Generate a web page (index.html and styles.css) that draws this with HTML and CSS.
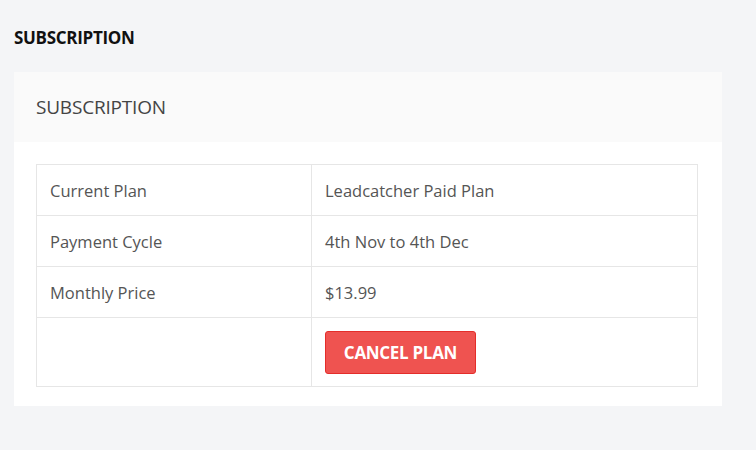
FILE: index.html
```html
<!DOCTYPE html>
<html>
<head>
<meta charset="utf-8">
<link rel="stylesheet" href="styles.css">
</head>
<body>
<h1 class="page-title">SUBSCRIPTION</h1>
<div class="card">
  <div class="card-header">SUBSCRIPTION</div>
  <div class="card-body">
    <table class="plan-table">
      <tr><td class="label">Current Plan</td><td>Leadcatcher Paid Plan</td></tr>
      <tr><td class="label">Payment Cycle</td><td>4th Nov to 4th Dec</td></tr>
      <tr><td class="label">Monthly Price</td><td>$13.99</td></tr>
      <tr class="action-row"><td class="label"></td><td><button class="btn-cancel">CANCEL PLAN</button></td></tr>
    </table>
  </div>
</div>
</body>
</html>
```
FILE: styles.css
```css
html, body {
  margin: 0;
  padding: 0;
  background: #f4f5f7;
  font-family: "Open Sans", "Noto Sans", sans-serif;
}
body {
  padding: 26px 34px 0 14px;
}
.page-title {
  margin: 0 0 23px 0;
  font-size: 17px;
  font-weight: 700;
  color: #111;
  line-height: 23px;
  letter-spacing: -0.3px;
}
.card {
  width: 708px;
  background: #fff;
}
.card-header {
  background: #fafafa;
  height: 70px;
  box-sizing: border-box;
  padding: 0 22px;
  display: flex;
  align-items: center;
  font-size: 19px;
  color: #444;
  letter-spacing: -0.2px;
}
.card-body {
  padding: 22px 24px 19px 22px;
}
.plan-table {
  width: 100%;
  border-collapse: collapse;
  font-size: 16.5px;
  color: #555;
}
.plan-table td {
  border: 1px solid #e6e6e6;
  height: 51px;
  box-sizing: border-box;
  padding: 0 13px;
  vertical-align: middle;
}
.plan-table td.label {
  width: 275px;
}
.action-row td {
  height: 69px;
}
.btn-cancel {
  display: block;
  width: 151px;
  height: 43px;
  background: #ef5350;
  border: 1px solid #e42d2a;
  border-radius: 3px;
  color: #fff;
  font-family: "Open Sans", "Noto Sans", sans-serif;
  font-weight: 700;
  font-size: 17px;
  letter-spacing: -0.3px;
  padding: 0;
}
```
